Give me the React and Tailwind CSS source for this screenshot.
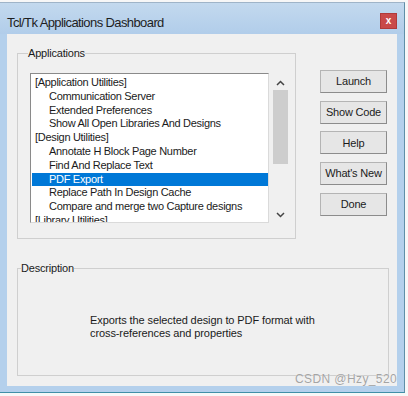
import React, { useState } from 'react';

const items = [
  { label: '[Application Utilities]', head: true },
  { label: 'Communication Server' },
  { label: 'Extended Preferences' },
  { label: 'Show All Open Libraries And Designs' },
  { label: '[Design Utilities]', head: true },
  { label: 'Annotate H Block Page Number' },
  { label: 'Find And Replace Text' },
  { label: 'PDF Export' },
  { label: 'Replace Path In Design Cache' },
  { label: 'Compare and merge two Capture designs' },
  { label: '[Library Utilities]', head: true },
];

const buttons = ['Launch', 'Show Code', 'Help', "What's New", 'Done'];

const App = () => {
  const [selected, setSelected] = useState(7);

  return (
    <div className="relative w-[408px] h-[396px] bg-[#f7f7f7] overflow-hidden font-['Liberation_Sans',sans-serif] text-[11px] text-[#1b1b1b]">
      <div className="mt-[2px] w-[405px] h-[391px] border-t border-[#9fb4c8] border-r border-b border-r-[#5f8fa8] border-b-[#3f8fa8] bg-[#b4d0ec] flex flex-col">
        {/* title bar */}
        <div className="h-[31px] flex items-start justify-between pl-[7px] pr-[7px] bg-gradient-to-b from-[#c3d9ee] to-[#b1cdea]">
          <span className="mt-[12px] text-[13px] leading-[16px] tracking-[-0.6px] text-[#1e1e1e]">Tcl/Tk Applications Dashboard</span>
          <button className="mt-[10px] w-[17px] h-[16px] bg-[#c94a4a] border border-[#b03a3a] flex items-center justify-center text-white text-[10px] font-bold leading-none">
            x
          </button>
        </div>

        {/* client area */}
        <div className="mx-[7px] mb-[6px] flex-1 bg-[#f0f0f0] pt-[12px] pl-[10px] pr-[10px]">
          <div className="flex">
            <fieldset className="w-[282px] h-[193px] border border-[#cfcfcf] pl-[12px] pt-[13px]">
              <legend className="ml-[-2px] px-0 leading-[14px] tracking-[-0.2px]">Applications</legend>
              <div className="flex">
                <div className="w-[239px] h-[150px] bg-white border border-t-[#8a8a8a] border-l-[#8a8a8a] border-r-[#dadada] border-b-[#dadada] overflow-hidden pl-[1px] pt-[2px]">
                  {items.map((it, i) => (
                    <div
                      key={it.label}
                      onClick={() => !it.head && setSelected(i)}
                      className={
                        'h-[13.8px] leading-[13.8px] whitespace-nowrap tracking-[-0.3px] ' +
                        (it.head ? 'pl-[3px] ' : 'pl-[17px] ') +
                        (selected === i ? 'bg-[#0078d7] text-white' : 'text-[#1b1b1b]')
                      }
                    >
                      {it.label}
                    </div>
                  ))}
                </div>
                <div className="w-[16px] ml-[3px] h-[150px] flex flex-col items-center">
                  <svg width="9" height="6" viewBox="0 0 9 6" className="mt-[7px]">
                    <path d="M1 5 L4.5 1.5 L8 5" stroke="#444" strokeWidth="1.5" fill="none" />
                  </svg>
                  <div className="mt-[4px] w-[15px] h-[74px] bg-[#cdcdcd]" />
                  <svg width="9" height="6" viewBox="0 0 9 6" className="mt-auto mb-[5px]">
                    <path d="M1 1 L4.5 4.5 L8 1" stroke="#444" strokeWidth="1.5" fill="none" />
                  </svg>
                </div>
              </div>
            </fieldset>

            <div className="ml-[24px] mt-[24px] flex flex-col gap-[7.7px]">
              {buttons.map((b) => (
                <button
                  key={b}
                  className="w-[67px] h-[23px] bg-[#e6e6e6] border border-[#b4b4b4] border-r-[#8c8c8c] border-b-[#8c8c8c] tracking-[-0.2px] text-[#1b1b1b]"
                >
                  {b}
                </button>
              ))}
            </div>
          </div>

          <fieldset className="mt-[22px] w-[372px] h-[115px] border border-[#cfcfcf] pt-0">
            <legend className="ml-[3px] leading-[14px] tracking-[-0.2px]">Description</legend>
            <div className="pl-[72px] pt-[39px] leading-[12.5px] tracking-[-0.1px]">
              Exports the selected design to PDF format with
              <br />
              cross-references and properties
            </div>
          </fieldset>
        </div>
      </div>
      <div className="absolute left-[295px] top-[372px] whitespace-nowrap text-[12px] leading-[15px] text-[#a4a4a4] tracking-[0.4px] [text-shadow:0_0_1px_#fff]">
        CSDN @Hzy_520
      </div>
    </div>
  );
};

export default App;
